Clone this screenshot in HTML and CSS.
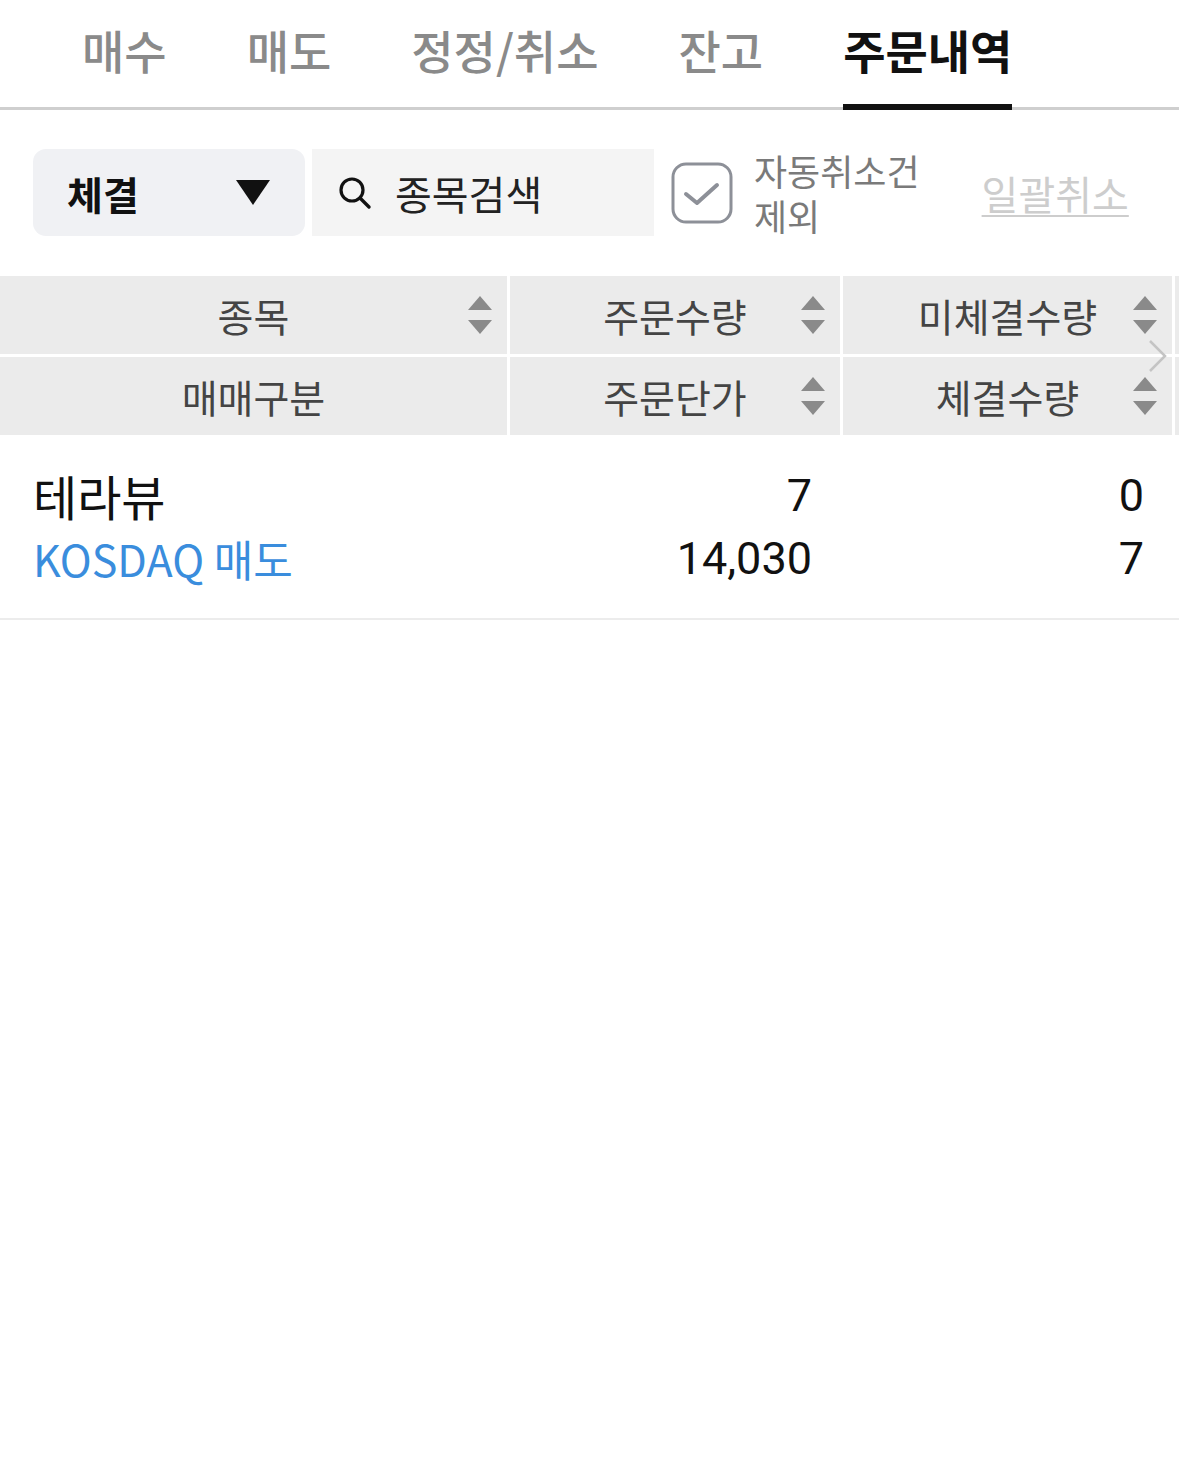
FILE: index.html
```html
<!DOCTYPE html>
<html>
<head>
    <link rel="stylesheet" href="styles.css">
</head>
<body>
    <div class="tabs">
        <div class="tab">매수</div>
        <div class="tab">매도</div>
        <div class="tab">정정/취소</div>
        <div class="tab">잔고</div>
        <div class="tab active">주문내역</div>
    </div>

    <div class="filters">
        <div class="select">
            <span>체결</span>
            <span class="caret"></span>
        </div>
        <div class="search">
            <svg class="search-icon" width="36" height="36" viewBox="0 0 36 36">
                <circle cx="15" cy="15" r="11" fill="none" stroke="#111" stroke-width="3.2"/>
                <line x1="23" y1="23" x2="32" y2="32" stroke="#111" stroke-width="3.4" stroke-linecap="round"/>
            </svg>
            <span>종목검색</span>
        </div>
        <div class="check">
            <svg class="check-box" width="62" height="62" viewBox="0 0 62 62">
                <rect x="2" y="2" width="58" height="58" rx="13" fill="#fff" stroke="#8d9098" stroke-width="3"/>
                <polyline points="15,32 26,41 46,23" fill="none" stroke="#8d9098" stroke-width="4" stroke-linecap="round" stroke-linejoin="round"/>
            </svg>
            <div class="check-label">
                <div class="check-line">자동취소건</div>
                <div class="check-line">제외</div>
            </div>
        </div>
        <div class="cancel-all">일괄취소</div>
    </div>

    <div class="grid-head">
        <div class="cell">종목<span class="sort"></span></div>
        <div class="cell">주문수량<span class="sort"></span></div>
        <div class="cell">미체결수량<span class="sort"></span></div>
        <div class="cell edge"></div>
        <div class="cell">매매구분</div>
        <div class="cell">주문단가<span class="sort"></span></div>
        <div class="cell">체결수량<span class="sort"></span></div>
        <div class="cell edge"></div>
        <svg class="more" width="24" height="36" viewBox="0 0 24 36">
            <polyline points="4,3 19,18 4,33" fill="none" stroke="#c4c4c4" stroke-width="2.5"/>
        </svg>
    </div>

    <div class="row">
        <div class="col-name">
            <div class="name">테라뷰</div>
            <div class="market">KOSDAQ 매도</div>
        </div>
        <div class="col-num">
            <div>7</div>
            <div>14,030</div>
        </div>
        <div class="col-num">
            <div>0</div>
            <div>7</div>
        </div>
        <div></div>
    </div>
</body>
</html>
```

FILE: styles.css
```css
body {
    margin: 0;
    padding: 0;
    background: #fff;
    color: #111;
    font-family: Roboto, 'Noto Sans CJK KR', sans-serif;
}
.tabs {
    display: flex;
    gap: 80px;
    height: 107px;
    padding-left: 82px;
    border-bottom: 3px solid #cfcfcf;
}
.tab {
    box-sizing: border-box;
    height: 110px;
    margin-bottom: -3px;
    padding-bottom: 6px;
    border-bottom: 6px solid transparent;
    display: flex;
    align-items: center;
    font-family: 'Noto Sans CJK KR', sans-serif;
    font-size: 46px;
    font-weight: 500;
    color: #8a8a8a;
}
.tab.active {
    color: #111;
    font-weight: bold;
    border-bottom-color: #111;
}
.filters {
    display: flex;
    align-items: center;
    height: 87px;
    margin-top: 39px;
    padding-left: 33px;
    font-family: 'Noto Sans CJK KR', sans-serif;
}
.select {
    box-sizing: border-box;
    width: 272px;
    height: 87px;
    background: #f0f1f4;
    border-radius: 13px;
    display: flex;
    align-items: center;
    justify-content: space-between;
    padding: 0 35px 0 34px;
    font-size: 39px;
    font-weight: bold;
    color: #111;
}
.caret {
    width: 0;
    height: 0;
    border-left: 17px solid transparent;
    border-right: 17px solid transparent;
    border-top: 25px solid #111;
}
.search {
    box-sizing: border-box;
    width: 342px;
    height: 87px;
    margin-left: 7px;
    background: #f4f4f4;
    display: flex;
    align-items: center;
    gap: 22px;
    padding-left: 25px;
    font-size: 40px;
    color: #222;
}
.check {
    display: flex;
    align-items: center;
    gap: 21px;
    margin-left: 17px;
}
.check-label {
    display: flex;
    flex-direction: column;
    font-size: 36px;
    color: #7a7a7a;
}
.check-line {
    height: 45px;
    line-height: 45px;
}
.cancel-all {
    margin-left: 62px;
    font-size: 40px;
    color: #cdcdcd;
    text-decoration: underline;
    text-decoration-thickness: 2px;
    text-underline-offset: 5px;
}
.grid-head {
    position: relative;
    display: grid;
    grid-template-columns: 507px 330px 329px 1fr;
    grid-template-rows: 78px 78px;
    gap: 3px;
    margin-top: 40px;
    font-family: 'Noto Sans CJK KR', sans-serif;
}
.cell {
    position: relative;
    background: #ebebeb;
    display: flex;
    align-items: center;
    justify-content: center;
    font-size: 39px;
    color: #444;
}
.sort {
    position: absolute;
    right: 15px;
    top: 20px;
    width: 24px;
    height: 38px;
}
.sort:before, .sort:after {
    content: "";
    position: absolute;
    left: 0;
    width: 0;
    height: 0;
    border-left: 12px solid transparent;
    border-right: 12px solid transparent;
}
.sort:before {
    top: 0;
    border-bottom: 14px solid #8a8a8a;
}
.sort:after {
    bottom: 0;
    border-top: 14px solid #8a8a8a;
}
.more {
    position: absolute;
    right: 9px;
    top: 62px;
}
.row {
    display: grid;
    grid-template-columns: 507px 330px 329px 1fr;
    gap: 3px;
    padding: 29px 0 28px;
    border-bottom: 2px solid #ececec;
    font-size: 45px;
    line-height: 63px;
}
.col-name {
    padding-left: 33px;
    font-family: 'Noto Sans CJK KR', sans-serif;
}
.name {
    color: #111;
    font-size: 48px;
}
.market {
    color: #3a8ddd;
    font-size: 43px;
}
.col-num {
    text-align: right;
    padding-right: 28px;
    color: #111;
}
```
